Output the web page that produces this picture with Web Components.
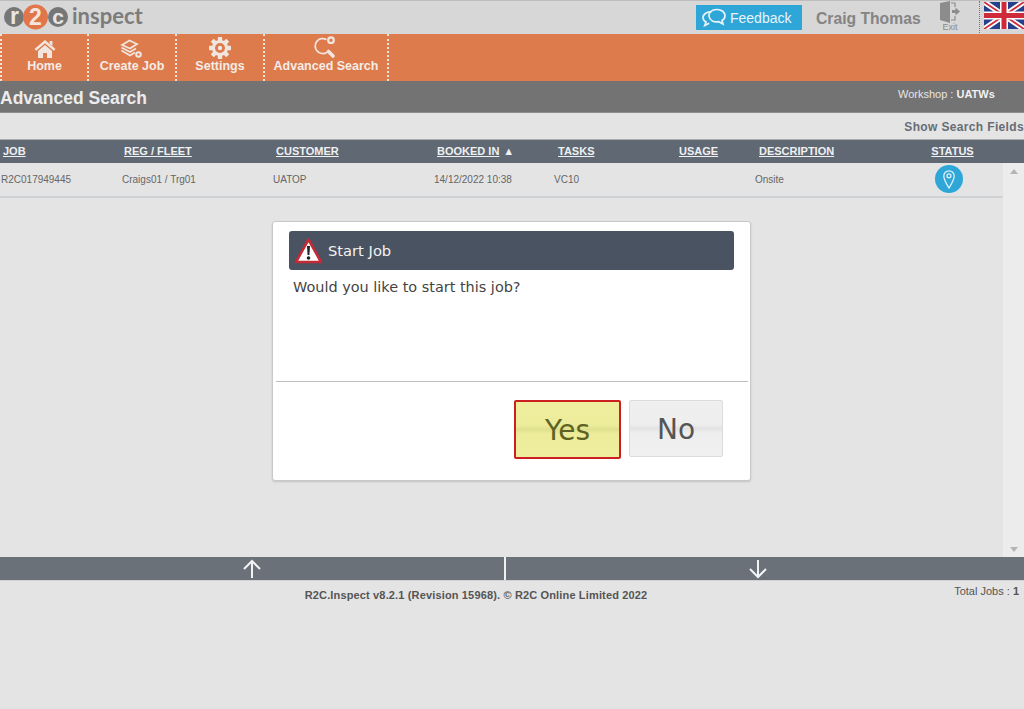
<!DOCTYPE html>
<html lang="en"><head><meta charset="utf-8"><title>R2C Inspect</title>
<style>html,body{margin:0;padding:0;background:#e4e4e4;height:100%;overflow:hidden}body{font-family:"Liberation Sans",Arial,sans-serif}</style>
</head><body>
<r2c-app></r2c-app>
<script>
function el(name, css, html){
  customElements.define(name, class extends HTMLElement{
    constructor(){super();this.attachShadow({mode:'open'}).innerHTML='<style>'+css+'</style>'+(typeof html==='function'?html(this):html);}
  });
}
const ICONS={
home:'<svg width="22" height="20" viewBox="0 0 22 20"><path fill="#f1e6df" d="M11 1 L21.5 10 L19.8 11.8 L11 4.2 L2.2 11.8 L.5 10 Z"/><path fill="#f1e6df" d="M15.5 2h3v5l-3-2.6z"/><path fill="#f1e6df" d="M4 12 L11 6 L18 12 V19 H13 V14 H9 V19 H4 Z"/></svg>',
job:'<svg width="24" height="20" viewBox="0 0 24 20" fill="none" stroke="#f1e6df"><path stroke-width="1.7" d="M2 6 L9.5 1.5 L17 5 L10 9.5 Z"/><path stroke-width="1.7" d="M1.5 8.500 L10 13 L16 9.500"/><path stroke-width="1.7" d="M1.500 11.500 L10 16.500 L15 13.500"/><circle cx="18.500" cy="15.500" r="2.300" stroke-width="2"/></svg>',
gear:'<svg width="22" height="22" viewBox="0 0 22 22"><g fill="#f1e6df"><rect x="8.800" y="0" width="4.400" height="5" rx=".8"/><rect x="8.800" y="17" width="4.400" height="5" rx=".8"/><rect x="0" y="8.800" width="5" height="4.400" rx=".8"/><rect x="17" y="8.800" width="5" height="4.400" rx=".8"/><g transform="rotate(45 11 11)"><rect x="8.800" y="0" width="4.400" height="5" rx=".8"/><rect x="8.800" y="17" width="4.400" height="5" rx=".8"/><rect x="0" y="8.800" width="5" height="4.400" rx=".8"/><rect x="17" y="8.800" width="5" height="4.400" rx=".8"/></g><circle cx="11" cy="11" r="2.200"/></g><circle cx="11" cy="11" r="6.500" fill="none" stroke="#f1e6df" stroke-width="3"/></svg>',
search:'<svg width="24" height="23" viewBox="0 0 24 23" fill="none" stroke="#f1e6df"><path stroke-width="1.700" d="M12.500 3.600 A7.500 7.500 0 1 0 13 16.200"/><path stroke-width="3.600" stroke-linecap="round" d="M14.500 15.500 L19 20"/><circle cx="17" cy="4.200" r="2.800" stroke-width="2.200"/></svg>'
};
el('r2c-logo',`:host{display:flex;align-items:center}
svg{display:block}
.t{font:700 22px/1 Lato,"Liberation Sans",sans-serif;color:#7c7c7c;position:relative;top:-2px}`,
`<svg width="68" height="28" viewBox="0 0 68 28">
<circle cx="10" cy="13" r="10" fill="#767676"/><circle cx="54" cy="13" r="10" fill="#767676"/><circle cx="31.500" cy="13" r="12.500" fill="#e0764a"/>
<text x="10.500" y="20" text-anchor="middle" font-family="Liberation Sans" font-weight="700" font-size="23" fill="#e6e6e6">r</text>
<text x="31.500" y="21" text-anchor="middle" font-family="Liberation Sans" font-weight="700" font-size="23" fill="#f2e6df">2</text>
<text x="54" y="20" text-anchor="middle" font-family="Liberation Sans" font-weight="700" font-size="21" fill="#e6e6e6">c</text></svg><span class="t">inspect</span>`);
el('r2c-topbar',`:host{display:flex;align-items:stretch;height:34px;box-sizing:border-box;background:#d7d7d7;border-top:1px solid #bdbdbd;padding-left:4px}
r2c-logo{flex:none}
.sp{flex:1}
.fb{flex:none;display:flex;align-items:center;gap:3px;box-sizing:border-box;width:106px;height:25px;margin-top:4px;padding-left:5px;background:#2fa6d8;color:#e8f4fa;font-size:14px}
.name{flex:none;width:105px;margin-left:14px;font-weight:700;font-size:15.700px;line-height:35px;color:#848484;white-space:nowrap}
.exit{flex:none;width:22px;display:flex;flex-direction:column;align-items:center;color:#8a8a8a;font-size:9px;line-height:9px;margin-left:18px}
.flag{flex:none;margin-left:18px;padding-left:4px;border-left:1px dotted #777;height:32px}
.flag svg{display:block;margin-top:1px}`,
`<r2c-logo></r2c-logo><div class="sp"></div>
<div class="fb"><svg width="26" height="20" viewBox="0 0 26 20" fill="none" stroke="#e8f4fa" stroke-width="1.700"><path d="M11 3.500C6 3.500 2 6 2 9.500c0 2 1.200 3.600 3 4.600L3.800 17.500l4.400-2.200"/><path d="M9 4.500C10.500 2.500 13 1.500 16 1.500c4.500 0 8 2.700 8 6.200 0 2-1.100 3.700-3 4.800l1 3.500-4.300-2.300c-4.700.7-9-1-9.700-5.500-.2-1.500.2-2.800 1-3.700z"/></svg><span>Feedback</span></div>
<div class="name">Craig Thomas</div>
<div class="exit"><svg width="22" height="22" viewBox="0 0 22 22"><path fill="#8c8c8c" d="M1 2 L11 0 V22 L1 19 Z"/><path fill="none" stroke="#8c8c8c" stroke-width="1.200" d="M12 2h4v4M16 15v4h-4"/><path fill="#8c8c8c" d="M13 9h3.500V6.500L21 10.500l-4.500 4V12H13z"/></svg><span>Exit</span></div>
<div class="flag"><svg width="40" height="27" viewBox="0 0 40 27"><rect width="40" height="27" fill="#27408b"/><path d="M0 0L40 27M40 0L0 27" stroke="#fff" stroke-width="5.500"/><path d="M0 0L40 27M40 0L0 27" stroke="#cf2a3a" stroke-width="1.800"/><path d="M20 0V27M0 13.500H40" stroke="#fff" stroke-width="8"/><path d="M20 0V27M0 13.500H40" stroke="#cf2a3a" stroke-width="5"/></svg></div>`);
el('r2c-navitem',`:host{display:flex;flex-direction:column;align-items:center;flex:none;box-sizing:border-box;height:47px;border-right:2px dotted #f3e4da;color:#f4ece6;font-weight:700;font-size:12.500px;line-height:15px;white-space:nowrap}
.i{height:25px;display:flex;align-items:flex-end;justify-content:center}`,
h=>`<div class="i">${ICONS[h.getAttribute('icon')]}</div><div class="l"><slot></slot></div>`);
el('r2c-nav',`:host{display:flex;height:47px;background:#dd7b4c;border-left:2px dotted #f3e4da;box-sizing:border-box}`,`<slot></slot>`);
el('r2c-titlebar',`:host{display:flex;height:32px;background:#737373;color:#eee;box-sizing:border-box;border-bottom:1px solid #8f8f8f}
h1{margin:0;flex:1;font-size:17.500px;line-height:35px;font-weight:700;color:#ececec}
.w{flex:none;width:126px;font-size:11px;line-height:26px;color:#e6e6e6}b{color:#f2f2f2}`,
`<h1>Advanced Search</h1><div class="w">Workshop : <b>UATWs</b></div>`);
el('r2c-searchrow',`:host{display:block;height:26px;background:#e4e4e4;text-align:right;font-weight:700;font-size:12px;letter-spacing:.35px;line-height:28px;color:#666d75}`,`<slot></slot>`);
el('r2c-thead',`:host{display:grid;grid-template-columns:121px 152px 161px 121px 121px 80px 157px 79px;height:24px;background:#5f6873;border-top:1px solid #a9adb2;box-sizing:border-box;color:#eef0f1;font-weight:700;font-size:11px;line-height:23px}
span{text-decoration:underline;padding-left:3px;white-space:nowrap}
i{font-style:normal;display:inline-block;padding-left:4px;text-decoration:none}
.st{text-align:center;padding-left:0}`,
`<span>JOB</span><span>REG / FLEET</span><span>CUSTOMER</span><span>BOOKED IN<i>▲</i></span><span>TASKS</span><span>USAGE</span><span>DESCRIPTION</span><span class="st">STATUS</span>`);
el('r2c-trow',`:host{display:grid;grid-template-columns:121px 151px 161px 120px 122px 79px 158px 79px;height:35px;box-sizing:border-box;border-bottom:2px solid #cfd3d6;color:#666;font-size:10px;line-height:34px;background:#e4e4e4}
span{padding-left:1px;white-space:nowrap}
span:first-child{padding-left:2px}
.st{display:flex;align-items:center;justify-content:center;padding:0 0 2px 0;position:relative;left:-3px}`,
`<span>R2C017949445</span><span>Craigs01 / Trg01</span><span>UATOP</span><span>14/12/2022 10:38</span><span>VC10</span><span></span><span>Onsite</span><span class="st"><svg width="28" height="28" viewBox="0 0 28 28"><circle cx="14" cy="14" r="14" fill="#2fa6d8"/><path fill="none" stroke="#dff1f9" stroke-width="1.300" d="M14 23 C11.500 18.500 8.800 15 8.800 11 A5.200 5.200 0 0 1 19.200 11 C19.200 15 16.500 18.500 14 23Z"/><circle cx="14" cy="10.800" r="2" fill="none" stroke="#dff1f9" stroke-width="1.300"/></svg></span>`);
el('r2c-scrollbar',`:host{display:flex;flex-direction:column;justify-content:space-between;align-items:center;flex:none;width:21px;background:#ececec;box-sizing:border-box;padding:6px 0 5px}
i{display:block;width:0;height:0;border-left:4px solid transparent;border-right:4px solid transparent}
.u{border-bottom:5px solid #b4b4b4}.d{border-top:5px solid #b4b4b4}`,`<i class="u"></i><i class="d"></i>`);
el('r2c-dialog',`:host{display:flex;flex-direction:column;position:absolute;left:272px;top:58px;width:479px;height:260px;box-sizing:border-box;background:#fff;border:1px solid #c9c9c9;border-radius:3px;box-shadow:0 1px 2px rgba(0,0,0,.15);font-family:"DejaVu Sans",Verdana,sans-serif;color:#444}
.h{margin:9px 16px 0;height:39px;background:#4a5361;border-radius:3px;color:#f2f2f2;font-size:14.700px;display:flex;align-items:center;gap:5px;padding-left:5px;flex:none}
.b{flex:1;padding:8px 20px 0;font-size:14.450px;line-height:18px}
.f{flex:none;height:99px;border-top:1px solid #bdbdbd;margin:0 2px 0 3px;display:flex;gap:8px;padding:18px 0 0 238px;box-sizing:border-box}
button{font:400 28px/1 "DejaVu Sans",Verdana,sans-serif;box-sizing:border-box;border-radius:2px;padding:3px 0 0;cursor:pointer}
.y{width:107px;height:59px;background:linear-gradient(#eeee9e 0,#ecec9b 42%,#e0e18e 50%,#ecec9b 58%,#eeee9e 100%);border:2px solid #cc1f1f;color:#5e6323}
.n{width:94px;height:57px;background:linear-gradient(#efefef 0,#eeeeee 42%,#e3e3e3 50%,#eeeeee 58%,#f0f0f0 100%);border:1px solid #dcdcdc;color:#555}`,
`<div class="h"><svg width="29" height="27" viewBox="0 0 29 27"><path d="M14.500 2.500L27 25H2Z" fill="#fff" stroke="#c42a35" stroke-width="2.600" stroke-linejoin="round"/><path d="M13 9h3l-.6 9h-1.800z" fill="#222"/><circle cx="14.500" cy="21" r="1.800" fill="#222"/></svg><span>Start Job</span></div>
<div class="b">Would you like to start this job?</div>
<div class="f"><button class="y">Yes</button><button class="n">No</button></div>`);
el('r2c-pager',`:host{display:flex;height:24px;background:#6a7178;border-bottom:1px solid #cfd1d3;box-sizing:border-box}
div{flex:1;display:flex;justify-content:center;align-items:center}
div+div{border-left:2px solid #eef0f1;padding-right:14px}`,
`<div style="flex:0 0 504px"><svg width="20" height="20" viewBox="0 0 20 20" fill="none" stroke="#f2f3f4" stroke-width="2"><path d="M10 19V2M2 10l8-8 8 8"/></svg></div><div><svg width="20" height="20" viewBox="0 0 20 20" fill="none" stroke="#f2f3f4" stroke-width="2"><path d="M10 1v17M2 10l8 8 8-8"/></svg></div>`);
el('r2c-footer',`:host{display:flex;position:relative;height:128px;background:#e4e4e4;color:#555;font-size:11px}
.c{flex:1;text-align:center;font-weight:700;line-height:28px;letter-spacing:.15px;padding-right:72px;color:#555}
.r{position:absolute;right:5px;top:3px;font-size:11px;line-height:14px}`,
`<div class="c">R2C.Inspect v8.2.1 (Revision 15968). © R2C Online Limited 2022</div><div class="r">Total Jobs : <b>1</b></div>`);
el('r2c-app',`:host{display:flex;flex-direction:column;width:1024px;height:709px;overflow:hidden}
.nav1{width:87px}.nav2{width:88px}.nav3{width:88px}.nav4{width:124px}
.main{position:relative;display:flex;height:394px;flex:none}
.left{flex:1}`,
`<r2c-topbar></r2c-topbar>
<r2c-nav><r2c-navitem class="nav1" icon="home">Home</r2c-navitem><r2c-navitem class="nav2" icon="job">Create Job</r2c-navitem><r2c-navitem class="nav3" icon="gear">Settings</r2c-navitem><r2c-navitem class="nav4" icon="search">Advanced Search</r2c-navitem></r2c-nav>
<r2c-titlebar></r2c-titlebar>
<r2c-searchrow>Show Search Fields</r2c-searchrow>
<r2c-thead></r2c-thead>
<div class="main"><div class="left"><r2c-trow></r2c-trow></div><r2c-scrollbar></r2c-scrollbar><r2c-dialog></r2c-dialog></div>
<r2c-pager></r2c-pager>
<r2c-footer></r2c-footer>`);
</script>
</body></html>
